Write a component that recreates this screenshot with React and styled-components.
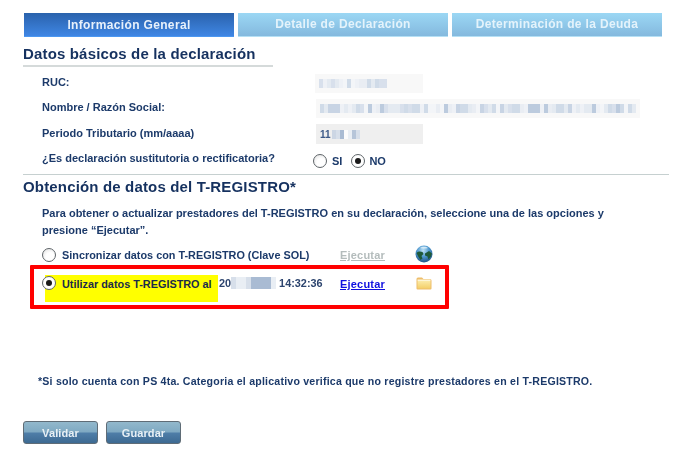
import React from "react";
import styled, { createGlobalStyle, css } from "styled-components";

const Global = createGlobalStyle`
  html, body { margin: 0; background: #fff; }
  body { font-family: "Liberation Sans", Arial, sans-serif; color: #1c3a6a; }
`;

const Page = styled.div`
  position: relative;
  width: 680px;
  height: 461px;
  overflow: hidden;
  padding: 13px 11px 0 23px;
  box-sizing: border-box;
  filter: blur(0.3px);
`;

const Tabs = styled.div`
  display: flex;
  gap: 4px;
  margin-left: 1px;
  width: 638px;
`;

const Tab = styled.div`
  flex: 1;
  height: 24px;
  box-sizing: border-box;
  display: flex;
  align-items: center;
  justify-content: center;
  font-size: 12px;
  font-weight: 700;
  letter-spacing: 0.34px;
  color: ${(p) => (p.$active ? "#e8f1fb" : "#e4f3fb")};
  background: ${(p) =>
    p.$active
      ? "linear-gradient(#2a62ac, #3f86e4)"
      : "linear-gradient(#9bd7f4, #84b9de)"};
  border-bottom: 1px solid ${(p) => (p.$active ? "#4c97f0" : "#b5e0f5")};
  padding-top: ${(p) => (p.$active ? "1px" : "0")};
  padding-bottom: ${(p) => (p.$active ? "0" : "2px")};
`;

const Heading = styled.h2`
  margin: 0;
  font-size: 15px;
  line-height: 18px;
  font-weight: 700;
  letter-spacing: 0.16px;
  color: #15315f;
`;

const BasicHead = styled.div`
  width: 250px;
  margin-top: 8px;
  padding-bottom: 2px;
  border-bottom: 2px solid #d5dada;
`;

const Rows = styled.div`
  margin-top: 4px;
  padding-left: 19px;
  display: grid;
  grid-template-columns: 273px 1fr;
  grid-auto-rows: 25.3px;
  align-items: center;
  width: 618px;
`;

const Label = styled.div`
  font-size: 11px;
  font-weight: 700;
  color: #1c3a6a;
  white-space: nowrap;
  padding-bottom: 3px;
`;

const Box = styled.div`
  width: ${(p) => p.$w}px;
  height: ${(p) => p.$height || 19}px;
  margin-left: ${(p) => p.$ml || 0}px;
  background: ${(p) => p.$bg || "#f8f8f8"};
  display: flex;
  align-items: center;
  padding-left: ${(p) => p.$pl || 0}px;
  box-sizing: border-box;
  overflow: hidden;
`;

const Period = styled.span`
  font-size: 10px;
  font-weight: 700;
  color: #3d5a88;
  margin-right: 1px;
`;

const Redacted = styled.div`
  display: flex;
  height: ${(p) => p.$h || 9}px;
  flex-shrink: 0;
`;

const Cell = styled.i`
  display: block;
  width: ${(p) => p.$w || 4}px;
  height: 100%;
  background: ${(p) => p.$c};
`;

const Choice = styled.div`
  display: flex;
  align-items: center;
  gap: 5px;
  margin-left: -2px;
  padding-top: 2px;
  font-size: 11px;
  font-weight: 700;
  color: #1c3a6a;
`;

const Radio = styled.span`
  display: inline-block;
  flex-shrink: 0;
  width: 14px;
  height: 14px;
  box-sizing: border-box;
  border-radius: 50%;
  border: 1px solid #5e6468;
  background: radial-gradient(circle at 60% 65%, #fff 40%, #dcdcdc 100%);
  position: relative;
  ${(p) =>
    p.$checked &&
    css`
      background: #fff;
      &::after {
        content: "";
        position: absolute;
        left: 3px;
        top: 3px;
        width: 6px;
        height: 6px;
        border-radius: 50%;
        background: #1a1a1a;
      }
    `}
`;

const SecondRadio = styled(Radio)`
  margin: 0 -1px 0 4px;
`;

const Divider = styled.div`
  height: 1px;
  width: 646px;
  background: #c6d0d0;
  margin-top: 2px;
`;

const RegHead = styled.div`
  margin-top: 3px;
`;

const Para = styled.p`
  margin: 9px 0 0 19px;
  font-size: 11px;
  line-height: 17px;
  font-weight: 700;
  color: #1c3a6a;
  width: 590px;
`;

const OptionRow = styled.div`
  display: grid;
  grid-template-columns: 20px 278px 75px auto;
  align-items: center;
  margin-left: 19px;
  height: ${(p) => p.$h}px;
  margin-top: ${(p) => p.$mt}px;
  font-size: 10.87px;
  font-weight: 700;
`;

const OptionText = styled.span`
  color: #1c3a6a;
  white-space: nowrap;
`;

const GlobeWrap = styled.span`
  display: block;
  margin-top: -2px;
  height: 18px;
`;

const RegRow = styled.div`
  display: flex;
  margin: 10px 0 0 22px;
  height: 28px;
  font-size: 10.87px;
  font-weight: 700;
`;

const Highlight = styled.div`
  width: 173px;
  height: 27px;
  background: #ffff00;
  position: relative;
  padding: 3px 0 0 17px;
  box-sizing: border-box;
  color: #1a2c4a;
  white-space: nowrap;
  line-height: 13px;
  flex-shrink: 0;
`;

const HighlightRadio = styled(Radio)`
  position: absolute;
  left: -3px;
  top: 1px;
`;

const Stamp = styled.div`
  display: flex;
  align-items: center;
  height: 15px;
  margin-left: 1px;
  width: 121px;
  flex-shrink: 0;
  color: #2c446e;
  white-space: nowrap;
`;

const Action = styled.a`
  font-size: 11px;
  font-weight: 700;
  letter-spacing: 0.2px;
  text-decoration: underline;
  color: ${(p) => (p.$disabled ? "#b4bcbc" : "#1010e0")};
  cursor: pointer;
`;

const RegAction = styled(Action)`
  margin-top: 3px;
  width: 76px;
  flex-shrink: 0;
`;

const FolderWrap = styled.span`
  display: block;
  margin-top: 2px;
`;

const Footnote = styled.p`
  margin: 71px 0 0 15px;
  font-size: 10.6px;
  line-height: 14px;
  font-weight: 700;
  letter-spacing: 0.21px;
  color: #1c3a6a;
  white-space: nowrap;
`;

const Buttons = styled.div`
  display: flex;
  gap: 8px;
  margin-top: 33px;
`;

const Button = styled.button`
  width: 75px;
  height: 23px;
  padding: 0;
  border: 1px solid #5f6c76;
  border-radius: 3px;
  font: 700 11px "Liberation Sans", Arial, sans-serif;
  letter-spacing: 0.1px;
  color: #e8f0f5;
  background: linear-gradient(#92b8cc 0%, #7fa9c2 48%, #4f7ea8 52%, #3d6a92 100%);
`;

const Annotation = styled.div`
  position: absolute;
  left: 30px;
  top: 265px;
  width: 419px;
  height: 44px;
  box-sizing: border-box;
  border: 4px solid #ff0000;
  border-radius: 1px;
  pointer-events: none;
`;

const tones = ["#e4eaf1", "#d0dbe8", "#eef1f6", "#d8e0ec", "#bccbde", "#e9edf3", "#c8d4e4", "#f3f5f8"];
const dark = ["#ccd6e4", "#b6c5d9", "#e9eef4", "#a9bbd3", "#fbfbfc", "#d7dfea"];

const cells = (n, seed, palette) =>
  Array.from({ length: n }, (_, i) => {
    const h = Math.abs(Math.sin((i + 1) * 12.9898 + seed * 78.233) * 43758.5453);
    return palette[Math.floor((h - Math.floor(h)) * palette.length)];
  });

const Blur = ({ n, seed, w, h, palette = tones }) => (
  <Redacted $h={h}>
    {cells(n, seed, palette).map((c, i) => (
      <Cell key={i} $c={c} $w={w} />
    ))}
  </Redacted>
);

const Globe = () => (
  <svg width="18" height="18" viewBox="0 0 18 18">
    <defs>
      <radialGradient id="g" cx="45%" cy="30%" r="75%">
        <stop offset="0" stopColor="#bfe3f7" />
        <stop offset="0.5" stopColor="#4a94cc" />
        <stop offset="1" stopColor="#1c4a7c" />
      </radialGradient>
    </defs>
    <circle cx="9" cy="9" r="8.5" fill="url(#g)" />
    <path d="M1.500 8c2-2 4-1.500 6-1l1 2-2 2 1 2.500-2 1.500-2-3zM10 8.500l4-2.500 3 2.500-1 3-2.500 3-1-3-2.500-1z" fill="#1f5a3a" />
    <path d="M5 3c2-1.500 6-1.800 8 0-2 .8-6 .9-8 0z" fill="#e6f5fd" opacity="0.8" />
  </svg>
);

const Folder = () => (
  <svg width="16" height="13" viewBox="0 0 16 13">
    <defs>
      <linearGradient id="f" x1="0" y1="0" x2="0" y2="1">
        <stop offset="0" stopColor="#fbeaa6" />
        <stop offset="1" stopColor="#f4cf68" />
      </linearGradient>
    </defs>
    <path d="M.5 2Q.5 .5 2 .5h4l1.500 1.500H14q1.500 0 1.500 1.500v8q0 1-1 1h-13q-1 0-1-1z" fill="#eebe6c" />
    <rect x="1.500" y="4" width="13" height="7.500" fill="url(#f)" />
    <rect x="1.500" y="2.500" width="13" height="1.500" fill="#fdf6d8" />
  </svg>
);

export default function App() {
  return (
    <Page>
      <Global />
      <Tabs>
        <Tab $active>Información General</Tab>
        <Tab>Detalle de Declaración</Tab>
        <Tab>Determinación de la Deuda</Tab>
      </Tabs>

      <BasicHead>
        <Heading>Datos básicos de la declaración</Heading>
      </BasicHead>

      <Rows>
        <Label>RUC:</Label>
        <Box $w={108} $pl={4}>
          <Blur n={17} seed={3} />
        </Box>
        <Label>Nombre / Razón Social:</Label>
        <Box $w={324} $ml={1} $pl={4}>
          <Blur n={79} seed={5} />
        </Box>
        <Label>Periodo Tributario (mm/aaaa)</Label>
        <Box $w={107} $ml={1} $pl={4} $bg="#efefef" $height={20}>
          <Period>11</Period>
          <Blur n={7} seed={7} palette={dark} />
        </Box>
        <Label>¿Es declaración sustitutoria o rectificatoria?</Label>
        <Choice>
          <Radio />
          <span>SI</span>
          <SecondRadio $checked />
          <span>NO</span>
        </Choice>
      </Rows>

      <Divider />

      <RegHead>
        <Heading>Obtención de datos del T-REGISTRO*</Heading>
      </RegHead>

      <Para>
        Para obtener o actualizar prestadores del T-REGISTRO en su declaración, seleccione una de las opciones y
        presione “Ejecutar”.
      </Para>

      <OptionRow $h={20} $mt={6}>
        <Radio />
        <OptionText>Sincronizar datos con T-REGISTRO (Clave SOL)</OptionText>
        <Action $disabled>Ejecutar</Action>
        <GlobeWrap>
          <Globe />
        </GlobeWrap>
      </OptionRow>

      <RegRow>
        <Highlight>
          <HighlightRadio $checked />
          Utilizar datos T-REGISTRO al
        </Highlight>
        <Stamp>
          20
          <Blur n={9} seed={2} w={5} h={12} palette={dark} />
          &nbsp;14:32:36
        </Stamp>
        <RegAction>Ejecutar</RegAction>
        <FolderWrap>
          <Folder />
        </FolderWrap>
      </RegRow>

      <Annotation />

      <Footnote>
        *Si solo cuenta con PS 4ta. Categoria el aplicativo verifica que no registre prestadores en el T-REGISTRO.
      </Footnote>

      <Buttons>
        <Button>Validar</Button>
        <Button>Guardar</Button>
      </Buttons>
    </Page>
  );
}
